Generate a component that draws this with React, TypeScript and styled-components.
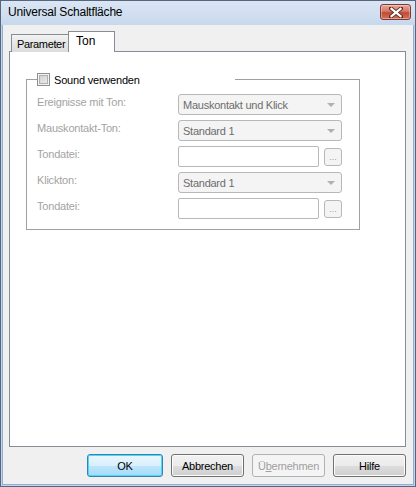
import styled, { createGlobalStyle, css } from "styled-components";

const GlobalStyle = createGlobalStyle`
    html, body {
        margin: 0;
        padding: 0;
        background: #ffffff;
    }
    * {
        box-sizing: border-box;
    }
`;

const Window = styled.div`
    width: 416px;
    height: 487px;
    border: 1px solid #56677d;
    background: linear-gradient(#dbe6f4, #c6d7ec 26px, #c4d5ea);
    display: flex;
    flex-direction: column;
    font-family: "Liberation Sans", Arial, sans-serif;
`;

const TitleBar = styled.div`
    height: 24px;
    display: flex;
    align-items: center;
    justify-content: space-between;
    padding: 0 4px 0 7px;
`;

const Title = styled.div`
    font-size: 12px;
    letter-spacing: -0.2px;
    color: #000000;
    padding-bottom: 2px;
`;

const CloseButton = styled.div`
    width: 31px;
    height: 16px;
    margin-top: -2px;
    border: 1px solid #7d3a30;
    border-radius: 3px;
    background: linear-gradient(#e9a796, #d3786a 45%, #c24a34 55%, #d4705a);
    box-shadow: inset 0 0 0 1px rgba(255, 255, 255, 0.35);
    display: flex;
    align-items: center;
    justify-content: center;
`;

const Client = styled.div`
    flex: 1;
    margin: 0 1px 1px 1px;
    border: 1px solid #8fb0d6;
    border-top: none;
    background: #f0f0f0;
    display: flex;
    flex-direction: column;
    padding: 6px 7px 7px 6px;
`;

const TabStrip = styled.div`
    display: flex;
    align-items: flex-end;
    padding-left: 2px;
    margin-bottom: -1px;
    position: relative;
    z-index: 1;
`;

const Tab = styled.div<{ active?: boolean }>`
    font-size: 11px;
    color: #000000;
    border: 1px solid #898c95;
    display: flex;
    white-space: nowrap;
    ${({ active }) =>
        active
            ? css`
                  width: 47px;
                  height: 21px;
                  margin-left: -2px;
                  background: #ffffff;
                  border-bottom: none;
                  padding: 2px 0 0 7px;
                  font-size: 12px;
              `
            : css`
                  width: 59px;
                  height: 18px;
                  background: linear-gradient(#f3f3f3, #e6e6e6 50%, #dcdcdc);
                  border-bottom: none;
                  padding: 3px 0 0 5px;
                  letter-spacing: -0.35px;
              `}
`;

const Panel = styled.div`
    flex: 1;
    background: #ffffff;
    border: 1px solid #898c95;
    padding: 21px 0 0 16px;
`;

const Group = styled.fieldset`
    width: 334px;
    margin: 0;
    border: 1px solid #a0a0a0;
    padding: 0 10px 10px 10px;
`;

const Legend = styled.legend`
    width: 198px;
    padding: 0;
    margin-left: 0;
    display: flex;
    align-items: center;
    gap: 4px;
    font-size: 11px;
    letter-spacing: -0.2px;
    color: #000000;
`;

const CheckBox = styled.span`
    width: 13px;
    height: 13px;
    border: 1px solid #8e8f8f;
    background: #f4f4f4;
    box-shadow: inset 0 0 0 1px #f4f4f4, inset 0 0 0 2px #aeb0b1;
    display: inline-block;
    background-image: linear-gradient(135deg, #cbcbcb, #f0f0f0);
    background-clip: content-box;
    padding: 2px;
`;

const FormGrid = styled.div`
    display: grid;
    grid-template-columns: 141px 164px;
    grid-auto-rows: 21px;
    row-gap: 5px;
    margin-top: 8px;
`;

const Label = styled.div`
    font-size: 11px;
    letter-spacing: -0.2px;
    color: #a3a3a3;
    padding-top: 2px;
`;

const Combo = styled.div`
    height: 21px;
    border: 1px solid #b6b8ba;
    border-radius: 3px;
    background: #f4f4f4;
    display: flex;
    align-items: center;
    justify-content: space-between;
    padding: 0 6px 0 4px;
    font-size: 11px;
    letter-spacing: -0.25px;
    color: #6d6d6d;
`;

const Arrow = styled.span`
    width: 0;
    height: 0;
    border-left: 4px solid transparent;
    border-right: 4px solid transparent;
    border-top: 4px solid #b0b0b0;
`;

const FileRow = styled.div`
    display: flex;
    align-items: center;
    justify-content: space-between;
`;

const TextField = styled.div`
    width: 141px;
    height: 21px;
    border: 1px solid #b6b8ba;
    border-radius: 2px;
    background: #ffffff;
`;

const BrowseButton = styled.div`
    width: 18px;
    height: 18px;
    border: 1px solid #b6b8ba;
    border-radius: 3px;
    background: #f4f4f4;
    font-size: 9px;
    color: #a0a0a0;
    display: flex;
    align-items: flex-end;
    justify-content: center;
    padding-bottom: 3px;
    line-height: 1;
`;

const ButtonRow = styled.div`
    display: flex;
    justify-content: flex-end;
    gap: 8px;
    margin-top: 7px;
`;

const Button = styled.div<{ variant?: "default" | "disabled" }>`
    width: 73px;
    height: 23px;
    border: 1px solid #707070;
    border-radius: 3px;
    background: linear-gradient(#f2f2f2, #ebebeb 50%, #dddddd 51%, #cfcfcf);
    box-shadow: inset 0 0 0 1px #fcfcfc;
    display: flex;
    align-items: center;
    justify-content: center;
    font-size: 11px;
    letter-spacing: -0.25px;
    color: #000000;
    ${({ variant }) =>
        variant === "default" &&
        css`
            width: 76px;
            border-color: #3c7fb1;
            background: linear-gradient(#eaf6fd, #d9f0fc 50%, #bee6fd 51%, #a7d9f5);
            box-shadow: inset 0 0 0 1px #48d8fb;
        `}
    ${({ variant }) =>
        variant === "disabled" &&
        css`
            border-color: #adb2b5;
            background: #f4f4f4;
            box-shadow: none;
            color: #a0a0a0;
        `}
`;

const Underline = styled.span`
    text-decoration: underline;
`;

const rows = [
    { label: "Ereignisse mit Ton:", kind: "combo", value: "Mauskontakt und Klick" },
    { label: "Mauskontakt-Ton:", kind: "combo", value: "Standard 1" },
    { label: "Tondatei:", kind: "file", value: "" },
    { label: "Klickton:", kind: "combo", value: "Standard 1" },
    { label: "Tondatei:", kind: "file", value: "" },
];

const App = () => {
    return (
        <>
            <GlobalStyle />
            <Window>
                <TitleBar>
                    <Title>Universal Schaltfläche</Title>
                    <CloseButton>
                        <svg width="14" height="11" viewBox="0 0 14 11">
                            <path
                                d="M2 1.5 L12 9.5 M12 1.5 L2 9.5"
                                stroke="#5a2a22"
                                strokeWidth="4"
                                strokeLinecap="square"
                            />
                            <path
                                d="M2.5 1.8 L11.5 9.2 M11.5 1.8 L2.5 9.2"
                                stroke="#ffffff"
                                strokeWidth="2.2"
                                strokeLinecap="square"
                            />
                        </svg>
                    </CloseButton>
                </TitleBar>
                <Client>
                    <TabStrip>
                        <Tab>Parameter</Tab>
                        <Tab active>Ton</Tab>
                    </TabStrip>
                    <Panel>
                        <Group>
                            <Legend>
                                <CheckBox />
                                Sound verwenden
                            </Legend>
                            <FormGrid>
                                {rows.map((row, i) => (
                                    <>
                                        <Label key={"l" + i}>{row.label}</Label>
                                        {row.kind === "combo" ? (
                                            <Combo key={"c" + i}>
                                                {row.value}
                                                <Arrow />
                                            </Combo>
                                        ) : (
                                            <FileRow key={"f" + i}>
                                                <TextField />
                                                <BrowseButton>...</BrowseButton>
                                            </FileRow>
                                        )}
                                    </>
                                ))}
                            </FormGrid>
                        </Group>
                    </Panel>
                    <ButtonRow>
                        <Button variant="default">OK</Button>
                        <Button>Abbrechen</Button>
                        <Button variant="disabled">
                            Ü<Underline>b</Underline>ernehmen
                        </Button>
                        <Button>Hilfe</Button>
                    </ButtonRow>
                </Client>
            </Window>
        </>
    );
};

export default App;
